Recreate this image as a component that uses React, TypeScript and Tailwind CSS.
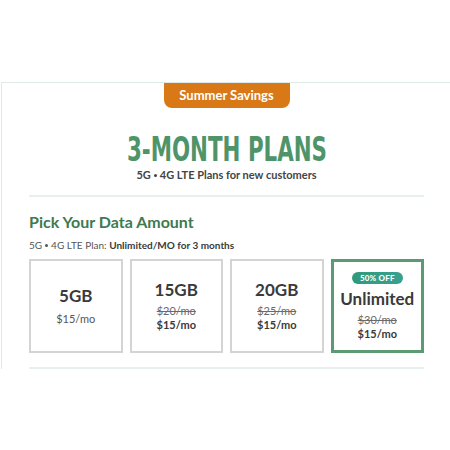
import React from "react";

const sans = { fontFamily: "Lato, 'Open Sans', 'Liberation Sans', sans-serif" };

function Dot() {
  return <span className="inline-block w-[3px] h-[3px] rounded-full bg-current align-middle mx-[3px] -mt-[2px]" />;
}

function Card({ gb, old, price, selected }: { gb: string; old?: string; price: string; selected?: boolean }) {
  return (
    <div
      className={
        "h-[94px] flex flex-col items-center justify-center " +
        (selected ? "border-[3px] border-[#5c9a74]" : "border-2 border-[#d4d4d4]")
      }
    >
      {selected && (
        <div className="h-[12px] px-[8px] rounded-full bg-gradient-to-r from-[#2f9a7a] to-[#3aa08f] text-white text-[8px] font-black leading-[12px] mb-[5px] tracking-[0.2px]">
          50% OFF
        </div>
      )}
      <div className="text-[17px] font-bold text-[#3a3a3a] leading-[20px]">{gb}</div>
      {old ? (
        <>
          <div className="mt-[4px] text-[11px] text-[#6b6b6b] line-through leading-[14px]">{old}</div>
          <div className="text-[11px] font-bold text-[#3a3a3a] leading-[14px]">{price}</div>
        </>
      ) : (
        <div className="mt-[6px] text-[11px] text-[#555] leading-[14px]">{price}</div>
      )}
    </div>
  );
}

export default function App() {
  return (
    <div className="w-[450px] h-[450px] bg-white overflow-hidden" style={sans}>
      <div className="pt-[82px]">
        <div className="ml-px w-[450px] h-[287px] border-t border-l border-[#dcebe7]">
          <div className="mx-auto w-[126px] h-[25px] rounded-b-[8px] bg-[#d97817] text-white text-[13px] font-bold flex items-center justify-center">
            Summer Savings
          </div>
          <div className="flex flex-col items-center mt-[25px]">
            <div
              className="text-[#4f9469] text-[33px] leading-[34px] font-bold scale-x-[0.72] whitespace-nowrap"
              style={{ fontFamily: "'Liberation Sans Narrow', 'DejaVu Sans Condensed', sans-serif" }}
            >
              3-MONTH PLANS
            </div>
            <div className="mt-[1px] text-[11px] font-bold text-[#444] leading-[14px]">
              5G<Dot />4G LTE Plans for new customers
            </div>
          </div>
          <div className="mx-[27px]">
            <div className="mt-[13px] h-[2px] bg-[#e6f1ef]" />
            <div className="mt-[15px] text-[16px] font-bold text-[#3d7a50] leading-[20px]">Pick Your Data Amount</div>
            <div className="mt-[7px] text-[10px] text-[#555] leading-[13px]">
              5G<Dot />4G LTE Plan: <span className="font-bold text-[#3a3a3a]">Unlimited/MO for 3 months</span>
            </div>
            <div className="mt-[7px] grid grid-cols-4 gap-[7px]">
              <Card gb="5GB" price="$15/mo" />
              <Card gb="15GB" old="$20/mo" price="$15/mo" />
              <Card gb="20GB" old="$25/mo" price="$15/mo" />
              <Card gb="Unlimited" old="$30/mo" price="$15/mo" selected />
            </div>
            <div className="mt-[14px] h-[2px] bg-[#e6f1ef]" />
          </div>
        </div>
      </div>
    </div>
  );
}
